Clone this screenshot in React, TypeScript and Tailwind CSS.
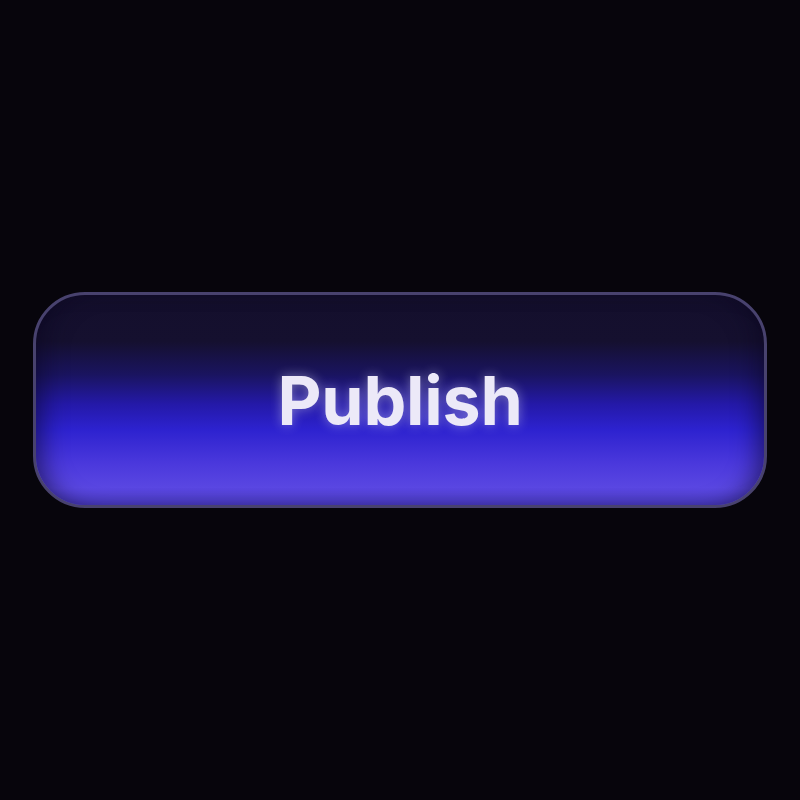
export default function App() {
  return (
    <div className="w-[800px] h-[800px] bg-[#07050c] flex items-center justify-center">
      <button
        className="w-[734px] h-[216px] rounded-[52px] border-[3px] border-[#48426e] bg-[linear-gradient(to_bottom,#140f2c_0%,#15102f_22%,#1a1460_38%,#2419a8_52%,#2d22cf_64%,#4a38dc_80%,#5a47e2_92%,#4b3cc4_100%)] shadow-[inset_18px_0_24px_-12px_rgba(10,6,30,0.55),inset_-18px_0_24px_-12px_rgba(10,6,30,0.55)] flex items-center justify-center"
      >
        <span
          className="text-[68px] leading-none font-bold tracking-[-0.2px] text-[#ece9f8] font-['Inter',sans-serif] [text-shadow:0_0_12px_rgba(255,255,255,0.4)]"
        >
          Publish
        </span>
      </button>
    </div>
  );
}
